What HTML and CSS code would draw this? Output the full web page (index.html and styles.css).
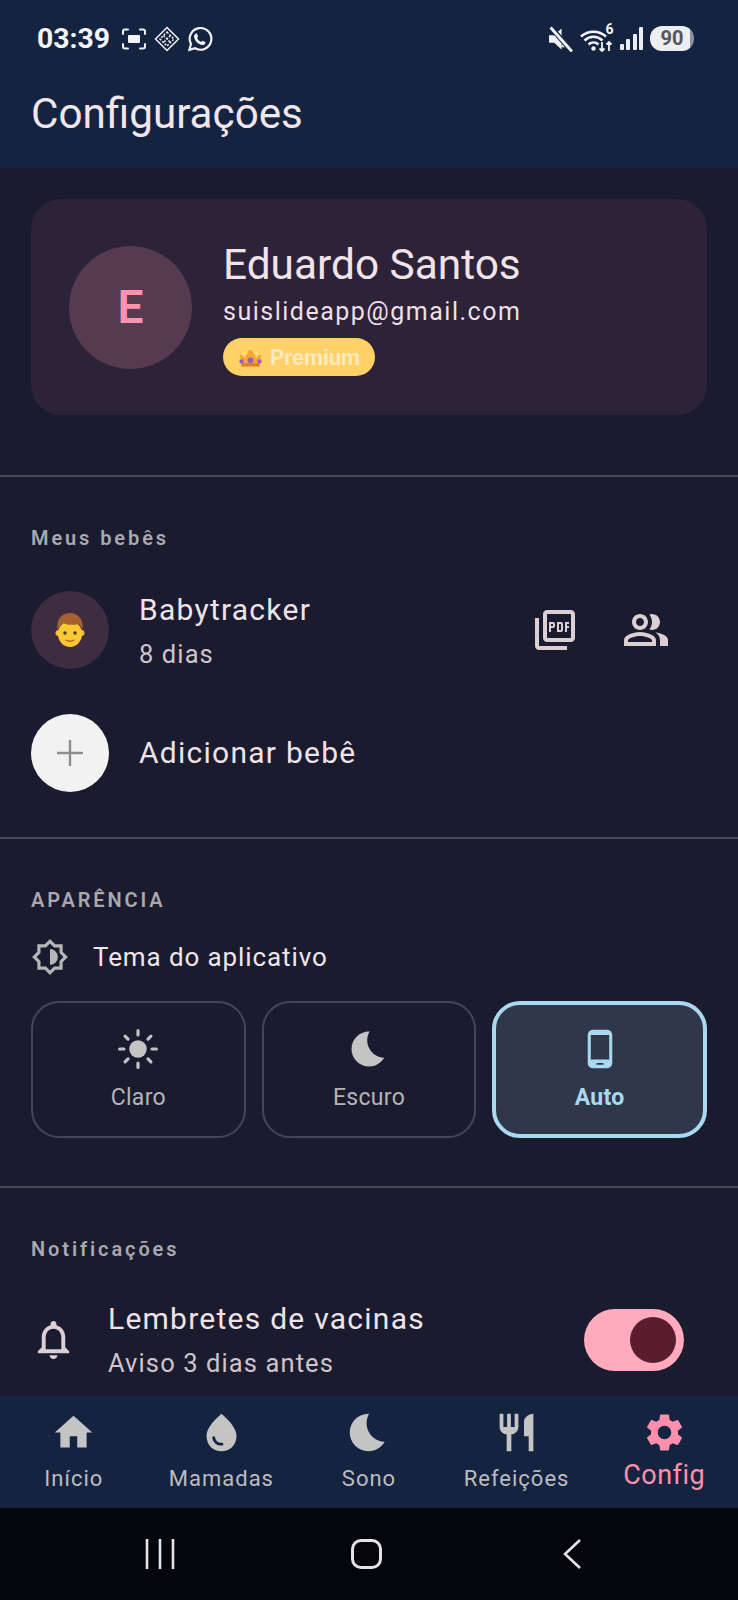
FILE: index.html
```html
<!DOCTYPE html>
<html lang="pt-BR">
<head>
    <meta charset="UTF-8">
    <meta name="viewport" content="width=device-width, initial-scale=1.0">
    <title>Configurações</title>
    <link rel="stylesheet" href="styles.css">
</head>
<body>
    <header class="app-header">
        <div class="status-bar">
            <div class="status-left">
                <span class="clock">03:39</span>
                <svg class="st-icon" viewBox="0 0 26 24" fill="none" stroke="#f2f2f6" stroke-width="2" stroke-linecap="round"><path d="M2 7V4.500Q2 2.500 4 2.500H7M19 2.500H22Q24 2.500 24 4.500V7M2 17V19.500Q2 21.500 4 21.500H7M19 21.500H22Q24 21.500 24 19.500V17"/><rect x="7" y="8" width="12" height="8" rx="1" fill="#f2f2f6" stroke="none"/></svg>
                <svg class="st-icon" viewBox="0 0 26 26" fill="none" stroke="#f2f2f6" stroke-width="1.500"><path d="M13 1.500L24.500 13L13 24.500L1.500 13Z"/><path stroke-dasharray="2 1.500" d="M13 6L20 13L13 20L6 13ZM9.500 9.500L16.500 16.500M16.500 9.500L9.500 16.500"/></svg>
                <svg class="st-icon" viewBox="0 0 24 24"><path fill="none" stroke="#f2f2f6" stroke-width="2" d="M2.200 22L3.700 16.600A10 10 0 1 1 7.500 20.500Z"/><path fill="#f2f2f6" d="M9 6.800L10.300 9.600L9.300 11C10 12.500 11.400 13.900 13 14.700L14.400 13.600L17.200 15C17 16.800 15.600 17.800 14 17.600C10.400 17.100 6.900 13.600 6.500 10C6.300 8.400 7.400 7 9 6.800Z"/></svg>
            </div>
            <div class="status-right">
                <svg class="st-mute" viewBox="0 0 24 24"><path fill="#f2f2f6" d="M1 8.500H6L13 2V22L6 15.500H1Z"/><path fill="#f2f2f6" d="M13 9L22 20H13Z"/><path stroke="#14233f" stroke-width="5" d="M2 0L23 24"/><path stroke="#f2f2f6" stroke-width="2.800" d="M2.500 1L23 24"/></svg>
                <div class="st-wifi">
                    <svg viewBox="0 0 34 24" fill="none" stroke="#f2f2f6" stroke-width="2.500"><path d="M1 8.500C8 2 19 2 26 8.500M4.500 12.500C10 7.500 17 7.500 22.500 12.500M8.500 16.500C11.500 13.800 15.500 13.800 18.500 16.500"/><circle cx="13.500" cy="20.500" r="2.200" fill="#f2f2f6" stroke="none"/><path stroke-width="1.800" d="M22 14V23M19.500 20.500L22 23L24.500 20.500M29 23V14M26.500 16.500L29 14L31.500 16.500"/></svg>
                    <span class="wifi-num">6</span>
                </div>
                <div class="st-signal"><i class="bar-1"></i><i class="bar-2"></i><i class="bar-3"></i><i class="bar-4"></i></div>
                <div class="battery">90</div>
            </div>
        </div>
        <h1 class="page-title">Configurações</h1>
    </header>

    <main class="content">
        <section class="profile-section">
            <div class="profile-card">
                <div class="profile-avatar">E</div>
                <div class="profile-info">
                    <div class="profile-name">Eduardo Santos</div>
                    <div class="profile-email">suislideapp@gmail.com</div>
                    <div class="premium-badge">
                        <svg class="crown" viewBox="0 0 24 20"><path fill="#f4a52c" d="M2.500 7L7 11L12 2L17 11L21.500 7L20 18H4Z"/><rect x="4" y="15.500" width="16" height="3" fill="#d9822b"/><circle cx="12" cy="13" r="2.500" fill="#9b59d0"/><circle cx="4" cy="14" r="1.900" fill="#9b59d0"/><circle cx="20" cy="14" r="1.900" fill="#9b59d0"/><circle cx="12" cy="2.500" r="1.300" fill="#ffe58a"/><circle cx="6.500" cy="6" r="1.100" fill="#ffe58a"/><circle cx="17.500" cy="6" r="1.100" fill="#ffe58a"/></svg>
                        <span>Premium</span>
                    </div>
                </div>
            </div>
        </section>

        <section class="section babies">
            <h2 class="section-label">Meus bebês</h2>
            <div class="baby-row">
                <div class="baby-avatar">
                    <svg class="boy" viewBox="0 0 32 36"><circle cx="4.500" cy="21" r="3" fill="#f7b93e"/><circle cx="27.500" cy="21" r="3" fill="#f7b93e"/><ellipse cx="16" cy="22" rx="12" ry="13" fill="#fcc934"/><path fill="#a5622f" d="M3.500 18C2 6 9 1 16 1C23 1 30 6 28.500 18C27 15 26 13 24.500 12C20 13.500 13 13 9 11C7 13 5 15 3.500 18Z"/><circle cx="11" cy="21" r="1.700" fill="#4a3320"/><circle cx="21" cy="21" r="1.700" fill="#4a3320"/><path fill="none" stroke="#a8701f" stroke-width="1.300" d="M11.500 28Q16 30.500 20.500 28"/></svg>
                </div>
                <div class="baby-text">
                    <div class="row-title">Babytracker</div>
                    <div class="row-sub">8 dias</div>
                </div>
                <div class="baby-actions">
                    <svg class="act-icon" viewBox="0 0 24 24"><path d="M20 2H8c-1.100 0-2 .9-2 2v12c0 1.100.9 2 2 2h12c1.100 0 2-.9 2-2V4c0-1.100-.9-2-2-2zm0 14H8V4h12v12zM4 6H2v14c0 1.100.9 2 2 2h14v-2H4V6zm12 6V9c0-.55-.45-1-1-1h-2v5h2c.55 0 1-.45 1-1zm-2-3h1v3h-1V9zm4 2h1v-1h-1V9h1V8h-2v5h1v-2zm-8 0h1c.55 0 1-.45 1-1V9c0-.55-.45-1-1-1H9v5h1v-2zm0-2h1v1h-1V9z"/></svg>
                    <svg class="act-icon" viewBox="0 0 24 24"><path d="M16.670 13.130C18.040 14.060 19 15.320 19 17v3h4v-3c0-2.180-3.570-3.470-6.330-3.870zM15 12c2.210 0 4-1.790 4-4s-1.790-4-4-4c-.47 0-.91.1-1.330.24C14.500 5.270 15 6.580 15 8s-.5 2.730-1.330 3.760c.42.14.86.24 1.330.24zM9 12c2.210 0 4-1.790 4-4s-1.790-4-4-4-4 1.790-4 4 1.790 4 4 4zm0-6c1.100 0 2 .9 2 2s-.9 2-2 2-2-.9-2-2 .9-2 2-2zM9 13c-2.670 0-8 1.340-8 4v3h16v-3c0-2.660-5.330-4-8-4zm6 5H3v-.99C3.200 16.290 6.300 15 9 15s5.800 1.290 6 2v1z"/></svg>
                </div>
            </div>
            <div class="add-row">
                <div class="add-circle">
                    <svg viewBox="0 0 28 28"><path stroke="#8e8e8e" stroke-width="2.400" d="M14 1V27M1 14H27"/></svg>
                </div>
                <div class="row-title">Adicionar bebê</div>
            </div>
        </section>

        <section class="section appearance">
            <h2 class="section-label">APARÊNCIA</h2>
            <div class="theme-title">
                <svg class="theme-icon" viewBox="0 0 24 24"><path d="M20 8.690V4h-4.690L12 .69 8.690 4H4v4.690L.69 12 4 15.310V20h4.690L12 23.310 15.310 20H20v-4.690L23.310 12 20 8.690zm-2 5.790V18h-3.520L12 20.480 9.520 18H6v-3.520L3.520 12 6 9.520V6h3.520L12 3.520 14.480 6H18v3.520L20.480 12 18 14.480z"/><path d="M12 7v10a5 5 0 0 0 0-10z"/></svg>
                <span>Tema do aplicativo</span>
            </div>
            <div class="theme-options">
                <div class="theme-btn">
                    <svg viewBox="0 0 24 24"><circle cx="12" cy="12" r="5"/><path fill="none" stroke="#c4c4c4" stroke-width="1.800" stroke-linecap="round" d="M12 1.500V4M12 20V22.500M1.500 12H4M20 12H22.500M4.600 4.600L6.300 6.300M17.700 17.700L19.400 19.400M4.600 19.400L6.300 17.700M17.700 6.300L19.400 4.600"/></svg>
                    <span>Claro</span>
                </div>
                <div class="theme-btn">
                    <svg viewBox="0 0 24 24"><path d="M12.340 2.020C6.590 1.820 2 6.420 2 12c0 5.520 4.480 10 10 10 3.710 0 6.930-2.020 8.660-5.020-7.510-.25-12.090-8.430-8.320-14.960z"/></svg>
                    <span>Escuro</span>
                </div>
                <div class="theme-btn theme-active">
                    <svg viewBox="0 0 24 24"><path d="M16 1H8C6.340 1 5 2.340 5 4v16c0 1.660 1.340 3 3 3h8c1.660 0 3-1.340 3-3V4c0-1.660-1.340-3-3-3zm-2 20h-4v-1h4v1zm3.250-3H6.750V4h10.500v14z"/></svg>
                    <span>Auto</span>
                </div>
            </div>
        </section>

        <section class="section notifications">
            <h2 class="section-label">Notificações</h2>
            <div class="notif-row">
                <svg class="bell" viewBox="0 0 24 24"><path d="M12 22c1.100 0 2-.9 2-2h-4c0 1.100.9 2 2 2zm6-6v-5c0-3.070-1.630-5.640-4.500-6.320V4c0-.83-.67-1.500-1.500-1.500s-1.500.67-1.500 1.500v.68C7.640 5.360 6 7.920 6 11v5l-2 2v1h16v-1l-2-2zm-2 1H8v-6c0-2.480 1.510-4.500 4-4.500s4 2.020 4 4.500v6z"/></svg>
                <div class="notif-text">
                    <div class="row-title">Lembretes de vacinas</div>
                    <div class="row-sub">Aviso 3 dias antes</div>
                </div>
                <div class="toggle"><div class="toggle-knob"></div></div>
            </div>
        </section>
    </main>

    <nav class="bottom-nav">
        <div class="nav-item">
            <svg viewBox="0 0 24 24"><path d="M10 20v-6h4v6h5v-8h3L12 3 2 12h3v8z"/></svg>
            <span>Início</span>
        </div>
        <div class="nav-item">
            <svg viewBox="0 0 24 24"><path fill-rule="evenodd" d="M12 2c-5.330 4.550-8 8.480-8 11.800 0 4.980 3.800 8.200 8 8.200s8-3.220 8-8.200c0-3.320-2.670-7.250-8-11.800zM7.830 14c.37 0 .67.26.74.62.41 2.220 2.280 2.980 3.640 2.870.43-.02.79.32.79.75 0 .4-.32.73-.72.75-2.130.13-4.620-1.090-5.190-4.120-.08-.45.28-.87.74-.87z"/></svg>
            <span>Mamadas</span>
        </div>
        <div class="nav-item">
            <svg viewBox="0 0 24 24"><path d="M12.340 2.020C6.590 1.820 2 6.420 2 12c0 5.520 4.480 10 10 10 3.710 0 6.930-2.020 8.660-5.020-7.510-.25-12.090-8.430-8.320-14.960z"/></svg>
            <span>Sono</span>
        </div>
        <div class="nav-item">
            <svg viewBox="0 0 24 24"><path d="M11 9H9V2H7v7H5V2H3v7c0 2.120 1.660 3.840 3.750 3.970V22h2.500v-9.030C11.340 12.840 13 11.120 13 9V2h-2v7zm5-3v8h2.500v8H21V2c-2.760 0-5 2.240-5 4z"/></svg>
            <span>Refeições</span>
        </div>
        <div class="nav-item nav-active">
            <svg viewBox="0 0 24 24"><path d="M19.140 12.940c.04-.3.06-.61.06-.94 0-.32-.02-.64-.07-.94l2.030-1.580c.18-.14.23-.41.12-.61l-1.920-3.320c-.12-.22-.37-.29-.59-.22l-2.390.96c-.5-.38-1.030-.7-1.620-.94l-.36-2.540c-.04-.24-.24-.41-.48-.41h-3.840c-.24 0-.43.17-.47.41l-.36 2.540c-.59.24-1.130.57-1.620.94l-2.390-.96c-.22-.08-.47 0-.59.22L2.740 8.870c-.12.21-.08.47.12.61l2.030 1.580c-.05.3-.09.63-.09.94s.02.64.07.94l-2.030 1.580c-.18.14-.23.41-.12.61l1.920 3.320c.12.22.37.29.59.22l2.390-.96c.5.38 1.030.7 1.620.94l.36 2.540c.05.24.24.41.48.41h3.840c.24 0 .44-.17.47-.41l.36-2.540c.59-.24 1.130-.56 1.620-.94l2.390.96c.22.08.47 0 .59-.22l1.920-3.320c.12-.22.07-.47-.12-.61l-2.010-1.580zM12 15.600c-1.980 0-3.600-1.620-3.600-3.600s1.620-3.600 3.600-3.600 3.600 1.620 3.600 3.600-1.620 3.600-3.600 3.600z"/></svg>
            <span>Config</span>
        </div>
    </nav>

    <div class="system-nav">
        <svg class="sys-recents" viewBox="0 0 30 30"><path stroke="#e4e4e6" stroke-width="2.600" d="M2 0V30M15 0V30M28 0V30"/></svg>
        <div class="sys-home"></div>
        <svg class="sys-back" viewBox="0 0 20 32" fill="none"><path stroke="#e4e4e6" stroke-width="2.600" d="M18 2L3 16L18 30"/></svg>
    </div>
</body>
</html>
```

FILE: styles.css
```css
* {
    box-sizing: border-box;
}

body {
    margin: 0;
    width: 738px;
    height: 1600px;
    display: flex;
    flex-direction: column;
    overflow: hidden;
    background-color: #1a1b2e;
    font-family: Roboto, 'Liberation Sans', sans-serif;
    color: #efe3e8;
}

/* header + status bar */
.app-header {
    height: 168px;
    background-color: #14233f;
    padding: 0 31px;
}

.status-bar {
    height: 77px;
    display: flex;
    justify-content: space-between;
    align-items: center;
}

.status-left {
    display: flex;
    align-items: center;
    padding-left: 6px;
}

.clock {
    font-size: 28.400px;
    font-weight: 700;
    color: #f5f5f8;
    margin-right: 11px;
}

.st-icon {
    width: 26px;
    height: 26px;
    margin-right: 7px;
}

.status-right {
    display: flex;
    align-items: center;
    padding-right: 13px;
}

.st-mute {
    width: 25px;
    height: 26px;
    margin-right: 7px;
}

.st-wifi {
    position: relative;
    width: 34px;
    height: 26px;
    margin-right: 6px;
}

.st-wifi svg {
    width: 34px;
    height: 24px;
    display: block;
    margin-top: 2px;
}

.wifi-num {
    position: absolute;
    right: 0;
    top: -5px;
    font-size: 14px;
    font-weight: 700;
    color: #f2f2f6;
}

.st-signal {
    display: flex;
    align-items: flex-end;
    gap: 2.500px;
    height: 23px;
    margin-right: 7px;
}

.st-signal i {
    display: block;
    width: 4px;
    background-color: #e9edf5;
    border-radius: 1px;
}

.bar-1 { height: 6px; }
.bar-2 { height: 11px; }
.bar-3 { height: 16px; }
.bar-4 { height: 23px; }

.battery {
    width: 44px;
    height: 25px;
    border-radius: 12px;
    background: linear-gradient(to right, #eceef2 90%, #8a90a0 90%);
    color: #55555c;
    font-size: 20px;
    font-weight: 700;
    line-height: 25px;
    text-align: center;
}

.page-title {
    margin: 7px 0 0;
    font-size: 42.200px;
    font-weight: 400;
    line-height: 60px;
    color: #f0e6ea;
}

/* scrolling area */
.content {
    flex: 1;
    min-height: 0;
    overflow: hidden;
}

.profile-section {
    padding: 31px 31px 60px;
}

.profile-card {
    height: 216px;
    display: flex;
    align-items: center;
    gap: 31px;
    padding-left: 38px;
    background-color: #2d2338;
    border-radius: 30px;
}

.profile-avatar {
    width: 123px;
    height: 123px;
    border-radius: 50%;
    background-color: #553a50;
    color: #ff92b0;
    font-size: 46px;
    font-weight: 600;
    display: flex;
    align-items: center;
    justify-content: center;
}

.profile-info {
    padding-top: 4px;
}

.profile-name {
    font-size: 42.400px;
    line-height: 46px;
    color: #f0e4e9;
}

.profile-email {
    margin-top: 9px;
    font-size: 25px;
    line-height: 30px;
    letter-spacing: 1.500px;
    color: #efdfe6;
}

.premium-badge {
    margin-top: 11px;
    width: 152px;
    height: 38px;
    display: flex;
    align-items: center;
    padding-left: 14px;
    gap: 6px;
    background-color: #ffd166;
    border-radius: 19px;
    color: #fbeac0;
    font-size: 22px;
    font-weight: 700;
}

.crown {
    width: 27px;
    height: 24px;
}

.section {
    border-top: 2px solid #4b4854;
    padding: 0 31px;
}

.section-label {
    margin: 0;
    font-size: 20px;
    font-weight: 600;
    line-height: 24px;
    letter-spacing: 2.900px;
    color: #a9a9ae;
}

.row-title {
    font-size: 30px;
    line-height: 36px;
    letter-spacing: 1.250px;
    color: #efe3e8;
}

.row-sub {
    margin-top: 11px;
    font-size: 25.500px;
    line-height: 30px;
    letter-spacing: 1.100px;
    color: #cfc4cb;
}

/* babies */
.babies {
    height: 362px;
    padding-top: 49px;
}

.baby-row {
    margin-top: 41px;
    display: flex;
    align-items: center;
    gap: 30px;
}

.baby-avatar {
    width: 78px;
    height: 78px;
    border-radius: 50%;
    background-color: #3e2c40;
    display: flex;
    align-items: center;
    justify-content: center;
    flex-shrink: 0;
}

.boy {
    width: 32px;
    height: 36px;
}

.baby-text {
    flex: 1;
}

.baby-actions {
    display: flex;
    align-items: center;
    gap: 43px;
    padding-right: 37px;
}

.act-icon {
    width: 48px;
    height: 48px;
    fill: #dccfd3;
}

.add-row {
    margin-top: 45px;
    display: flex;
    align-items: center;
    gap: 30px;
}

.add-circle {
    width: 78px;
    height: 78px;
    border-radius: 50%;
    background-color: #f2f2f2;
    display: flex;
    align-items: center;
    justify-content: center;
}

.add-circle svg {
    width: 28px;
    height: 28px;
}

/* appearance */
.appearance {
    height: 349px;
    padding-top: 49px;
}

.theme-title {
    margin-top: 26px;
    display: flex;
    align-items: center;
    gap: 24px;
    font-size: 26px;
    line-height: 36px;
    letter-spacing: 0.900px;
    color: #f0e6ea;
}

.theme-icon {
    width: 38px;
    height: 38px;
    fill: #b6b6b8;
}

.theme-options {
    margin-top: 25px;
    display: grid;
    grid-template-columns: repeat(3, 1fr);
    gap: 16px;
}

.theme-btn {
    height: 137px;
    display: flex;
    flex-direction: column;
    align-items: center;
    justify-content: center;
    gap: 14px;
    border: 2px solid #45455a;
    border-radius: 28px;
    font-size: 23px;
    color: #b4b4b8;
    letter-spacing: 0.3px;
}

.theme-btn svg {
    width: 42px;
    height: 42px;
    fill: #c4c4c4;
}

.theme-active {
    border: 4px solid #a9d9ee;
    background-color: #30374b;
    color: #a9d9ee;
    font-weight: 700;
}

.theme-active svg {
    fill: #a9d9ee;
}

/* notifications */
.notifications {
    padding-top: 49px;
}

.notif-row {
    margin-top: 40px;
    display: flex;
    align-items: center;
}

.bell {
    width: 47px;
    height: 47px;
    fill: #dccfd3;
    margin-left: -1px;
    margin-right: 31px;
}

.notif-text {
    flex: 1;
}

.toggle {
    width: 100px;
    height: 62px;
    margin-right: 23px;
    padding-left: 46px;
    display: flex;
    align-items: center;
    background-color: #ffabbd;
    border-radius: 31px;
}

.toggle-knob {
    width: 46px;
    height: 46px;
    border-radius: 50%;
    background-color: #5a1d2e;
}

/* bottom bars */
.bottom-nav {
    height: 112px;
    display: flex;
    background-color: #14233f;
}

.nav-item {
    width: 147.600px;
    display: flex;
    flex-direction: column;
    align-items: center;
    padding-top: 14px;
    font-size: 22px;
    letter-spacing: 1px;
    color: #bcbcc0;
}

.nav-item svg {
    width: 45px;
    height: 45px;
    fill: #c4c4c4;
    margin-bottom: 11px;
}

.nav-active {
    color: #ff8fab;
    font-size: 27px;
    line-height: 30px;
    letter-spacing: 0.5px;
}

.nav-active svg {
    fill: #ff8fab;
    margin-bottom: 5px;
}

.system-nav {
    height: 92px;
    background-color: #05060b;
    display: flex;
    align-items: center;
}

.sys-recents {
    width: 30px;
    height: 30px;
    margin-left: 145px;
}

.sys-home {
    width: 31px;
    height: 30px;
    margin-left: 176px;
    border: 3px solid #e4e4e6;
    border-radius: 10px;
}

.sys-back {
    width: 20px;
    height: 32px;
    margin-left: 180px;
}
```
